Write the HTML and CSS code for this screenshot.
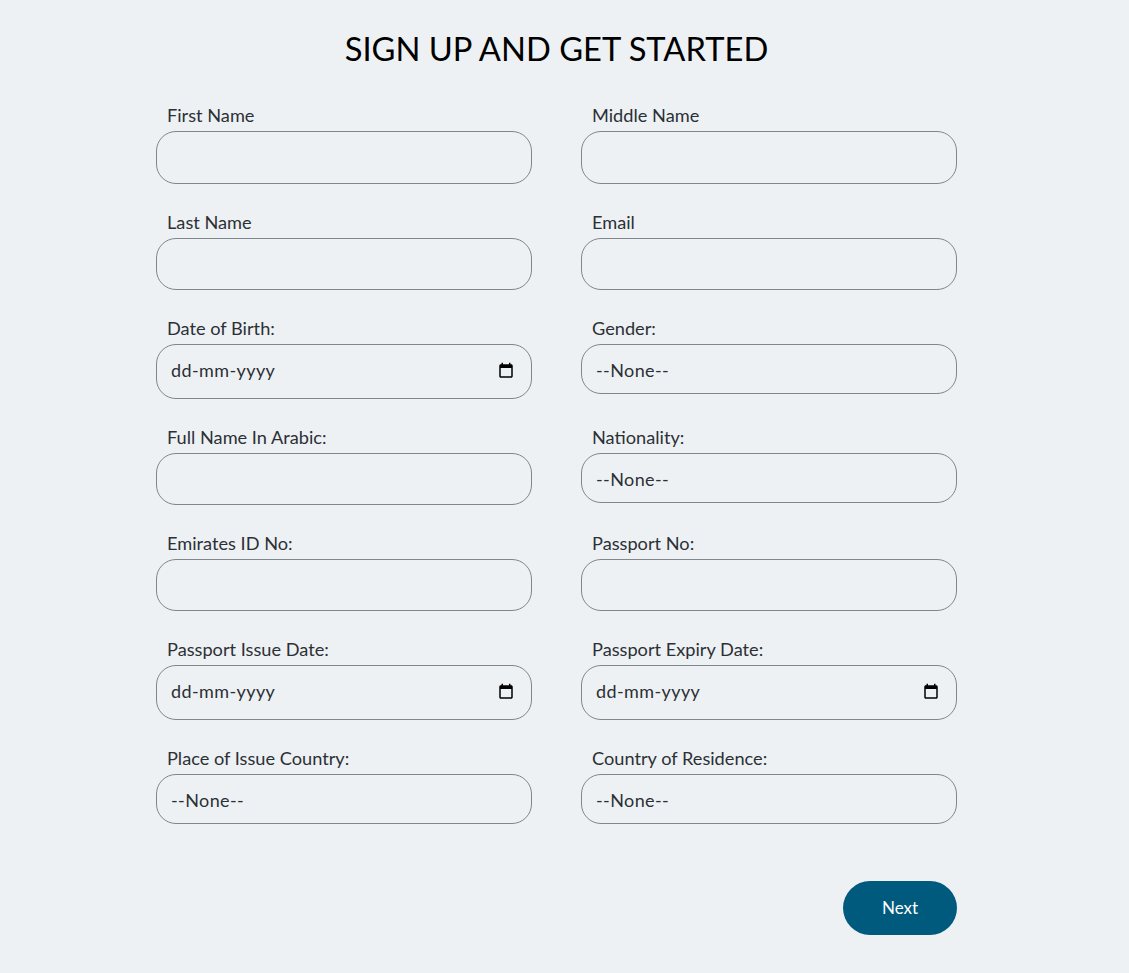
FILE: index.html
```html
<!DOCTYPE html>
<html lang="en">
<head>
<meta charset="utf-8">
<title>Sign up</title>
<link rel="stylesheet" href="styles.css">
</head>
<body>
<main class="page">
  <h1 class="title">SIGN UP AND GET STARTED</h1>
  <form class="form">
    <div class="grid">
      <div class="field"><label class="label">First Name</label><input class="control" type="text"></div>
      <div class="field"><label class="label">Middle Name</label><input class="control" type="text"></div>
      <div class="field"><label class="label">Last Name</label><input class="control" type="text"></div>
      <div class="field"><label class="label">Email</label><input class="control" type="text"></div>
      <div class="field"><label class="label">Date of Birth:</label>
        <div class="control date"><span class="date-text">dd-mm-yyyy</span><svg class="cal" viewBox="0 0 24 24"><path d="M19 3h-1V1h-2v2H8V1H6v2H5c-1.11 0-2 .9-2 2v14c0 1.1.89 2 2 2h14c1.1 0 2-.9 2-2V5c0-1.1-.9-2-2-2zm0 16H5V8h14v11z"/></svg></div></div>
      <div class="field"><label class="label">Gender:</label><select class="control select"><option>--None--</option></select></div>
      <div class="field"><label class="label">Full Name In Arabic:</label><input class="control" type="text"></div>
      <div class="field"><label class="label">Nationality:</label><select class="control select"><option>--None--</option></select></div>
      <div class="field"><label class="label">Emirates ID No:</label><input class="control" type="text"></div>
      <div class="field"><label class="label">Passport No:</label><input class="control" type="text"></div>
      <div class="field"><label class="label">Passport Issue Date:</label>
        <div class="control date"><span class="date-text">dd-mm-yyyy</span><svg class="cal" viewBox="0 0 24 24"><path d="M19 3h-1V1h-2v2H8V1H6v2H5c-1.11 0-2 .9-2 2v14c0 1.1.89 2 2 2h14c1.1 0 2-.9 2-2V5c0-1.1-.9-2-2-2zm0 16H5V8h14v11z"/></svg></div></div>
      <div class="field"><label class="label">Passport Expiry Date:</label>
        <div class="control date"><span class="date-text">dd-mm-yyyy</span><svg class="cal" viewBox="0 0 24 24"><path d="M19 3h-1V1h-2v2H8V1H6v2H5c-1.11 0-2 .9-2 2v14c0 1.1.89 2 2 2h14c1.1 0 2-.9 2-2V5c0-1.1-.9-2-2-2zm0 16H5V8h14v11z"/></svg></div></div>
      <div class="field"><label class="label">Place of Issue Country:</label><select class="control select"><option>--None--</option></select></div>
      <div class="field"><label class="label">Country of Residence:</label><select class="control select"><option>--None--</option></select></div>
    </div>
    <div class="actions"><button class="next" type="button">Next</button></div>
  </form>
</main>
</body>
</html>
```
FILE: styles.css
```css
* { box-sizing: border-box; }
html, body { margin: 0; padding: 0; }
body {
  background: #eef1f4;
  color: #2b3035;
  font-family: "Lato", "Noto Sans", sans-serif;
  height: 973px;
  overflow: hidden;
  padding-right: 16px;
}
.page { width: 801px; margin: 0 auto; padding-top: 27px; }
.title {
  margin: 0 0 33.4px;
  height: 44px;
  line-height: 44px;
  text-align: center;
  font-size: 32.7px;
  font-weight: 400;
  color: #000;
}
.grid {
  display: grid;
  grid-template-columns: 376px 376px;
  column-gap: 49px;
  row-gap: 26.9px;
  align-items: start;
}
.field { display: flex; flex-direction: column; }
.label {
  height: 27px;
  line-height: 22.4px;
  padding-left: 11px;
  font-size: 18.2px;
  font-weight: 400;
}
.control {
  display: block;
  width: 100%;
  height: 52.4px;
  padding: 0 14px;
  background: transparent;
  border: 1px solid #7f868c;
  border-radius: 20px;
  font: inherit;
  font-size: 18px;
  letter-spacing: 0.4px;
  color: #2b3035;
  outline: none;
}
.date {
  height: 54.7px;
  display: flex;
  align-items: center;
  justify-content: space-between;
  padding-right: 16px;
}
.date-text { margin-bottom: 2px; }
.cal { width: 18px; height: 18px; fill: #000; flex: none; }
.select {
  height: 50px;
  padding-top: 2px;
  appearance: none;
  -webkit-appearance: none;
}
.actions { display: flex; justify-content: flex-end; margin-top: 57.2px; }
.next {
  width: 114px;
  height: 54px;
  padding-bottom: 1px;
  border: 0;
  border-radius: 27px;
  background: #005a7d;
  color: #fff;
  font: inherit;
  font-size: 17px;
}
```
